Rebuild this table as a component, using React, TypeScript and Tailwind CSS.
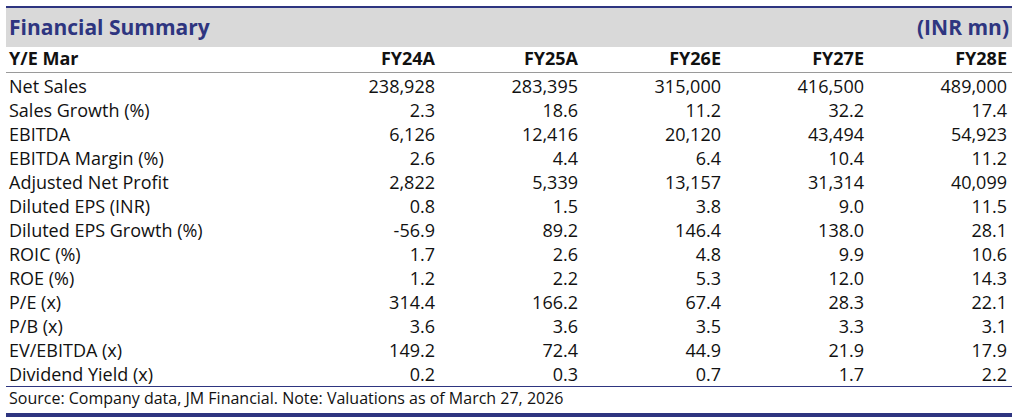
import React from 'react';

const years = ['FY24A', 'FY25A', 'FY26E', 'FY27E', 'FY28E'];

const rows: [string, string[]][] = [
  ['Net Sales', ['238,928', '283,395', '315,000', '416,500', '489,000']],
  ['Sales Growth (%)', ['2.3', '18.6', '11.2', '32.2', '17.4']],
  ['EBITDA', ['6,126', '12,416', '20,120', '43,494', '54,923']],
  ['EBITDA Margin (%)', ['2.6', '4.4', '6.4', '10.4', '11.2']],
  ['Adjusted Net Profit', ['2,822', '5,339', '13,157', '31,314', '40,099']],
  ['Diluted EPS (INR)', ['0.8', '1.5', '3.8', '9.0', '11.5']],
  ['Diluted EPS Growth (%)', ['-56.9', '89.2', '146.4', '138.0', '28.1']],
  ['ROIC (%)', ['1.7', '2.6', '4.8', '9.9', '10.6']],
  ['ROE (%)', ['1.2', '2.2', '5.3', '12.0', '14.3']],
  ['P/E (x)', ['314.4', '166.2', '67.4', '28.3', '22.1']],
  ['P/B (x)', ['3.6', '3.6', '3.5', '3.3', '3.1']],
  ['EV/EBITDA (x)', ['149.2', '72.4', '44.9', '21.9', '17.9']],
  ['Dividend Yield (x)', ['0.2', '0.3', '0.7', '1.7', '2.2']],
];

const App: React.FC = () => {
  return (
    <div
      className="w-[1024px] h-[417px] bg-white pt-[6px] px-[6px] text-[#111] overflow-hidden"
      style={{ fontFamily: '"Open Sans", Lato, sans-serif' }}
    >
      <div className="w-[1006px]">
        {/* Title band */}
        <div className="border-t-2 border-[#2e3580] bg-[#d9d9d9] h-[41px] flex items-center justify-between px-[3px] text-[#2e3580] text-[21px] font-bold">
          <span>Financial Summary</span>
          <span>(INR mn)</span>
        </div>

        {/* Column header */}
        <div className="grid grid-cols-[288px_repeat(5,143px)] h-[26px] leading-[22px] border-b border-[#9a9a9a] text-[18px] font-bold">
          <span className="pl-[3px]">Y/E Mar</span>
          {years.map((y) => (
            <span key={y} className="text-right pr-[2px]">{y}</span>
          ))}
        </div>

        {/* Data rows */}
        <div className="pb-[1px] border-b border-[#2e3580]">
          {rows.map(([label, vals]) => (
            <div key={label} className="grid grid-cols-[288px_repeat(5,143px)] h-[24px] pt-[3px] leading-[20px] text-[18px]">
              <span className="pl-[3px]">{label}</span>
              {vals.map((v, i) => (
                <span key={i} className="text-right pr-[2px]">{v}</span>
              ))}
            </div>
          ))}
        </div>

        {/* Footer */}
        <div className="h-[30px] pl-[3px] text-[16px] leading-[22px] border-b-[4px] border-[#2e3580]">
          Source: Company data, JM Financial. Note: Valuations as of March 27, 2026
        </div>
      </div>
    </div>
  );
};

export default App;
